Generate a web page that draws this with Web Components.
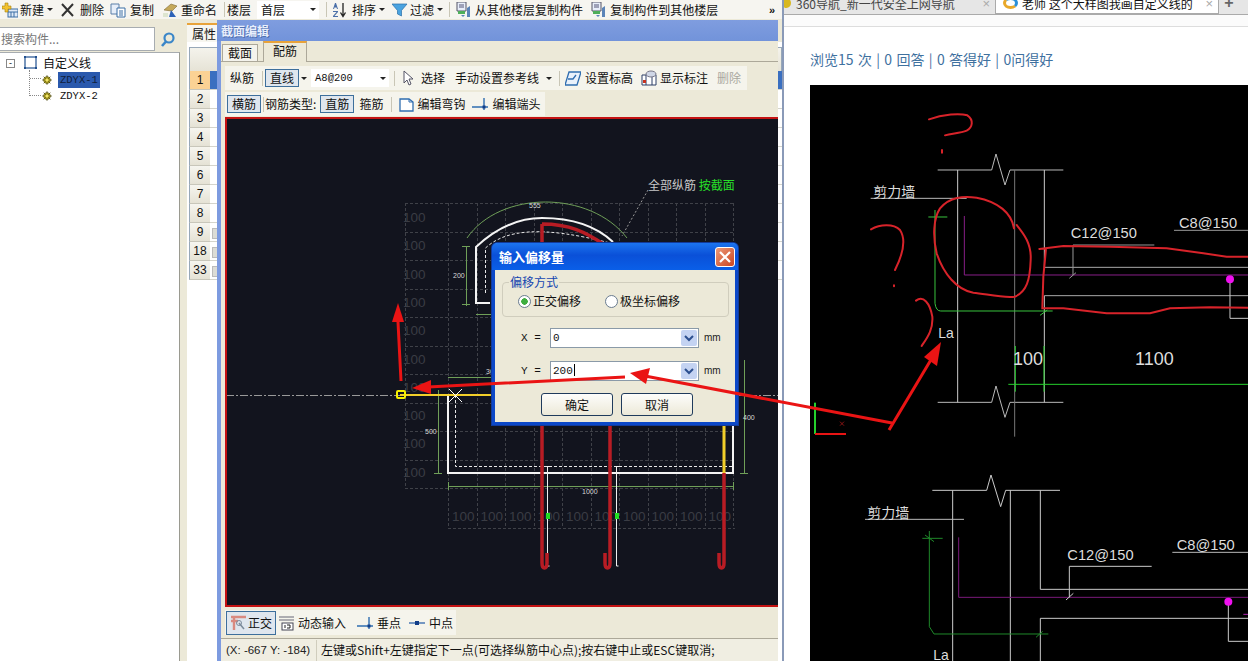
<!doctype html>
<html lang="zh">
<head>
<meta charset="UTF-8" />
<title>截面编辑</title>
<style>
  html, body { margin: 0; height: 100%; overflow: hidden; background: #fff; }
  body { font: 12px/16px "Noto Sans CJK SC", "Liberation Sans", sans-serif; color: #111; }
</style>
</head>
<body>
<app-shell></app-shell>

<script>
const ICONS = {
  add: '<rect x="6" y="7" width="10" height="8" fill="#dfe9f7" stroke="#3a6ea5"/><path d="M6 10h10M9 10v5M12 10v5" stroke="#3a6ea5"/><path d="M0 4h3V1h3v3h3v3H6v3H3V7H0z" fill="#f2c230" stroke="#a57f10" stroke-width=".6"/>',
  del: '<path d="M2 2l11 12M13 2L2 14" stroke="#333" stroke-width="2"/>',
  copy: '<path d="M1 2h8v10H1z" fill="#e6eef9" stroke="#5b7fa8"/><path d="M7 6h8v9H7z" fill="#fff" stroke="#3a6ea5"/><path d="M9 9h4M9 11h4M9 13h4" stroke="#3a6ea5"/>',
  rename: '<path d="M2 8l7-6 6 2-5 5z" fill="#c5a95a" stroke="#7f6a35" stroke-width=".6"/><path d="M9 8l5 7H7z" fill="#2d62b8"/><path d="M1 11h5v4H1z" fill="#dde5d0"/>',
  sort: '<path d="M3 1L1 7h1l.5-1.500h2L5 7h1L4 1zM1 9h5v1L2.500 14H6v1H1v-1l3.500-4H1z" fill="#4a6fa8"/><path d="M11 1v12M8.500 10.500L11 14.500l2.500-4" fill="none" stroke="#222" stroke-width="1.300"/>',
  filter: '<path d="M0 2h15L9.500 8.500V14l-4-2V8.500z" fill="#4aa3e0" stroke="#2a6fa8" stroke-width=".7"/>',
  floors: '<path d="M2 0h9v9H2z" fill="#e8eefa" stroke="#556"/><path d="M4 3h5M4 5h5" stroke="#557"/><path d="M3 9h7v3H3z" fill="#4fae5a"/><path d="M12 6l3-2v11h-3zM6 13l2 2 2-2z" fill="#5b84b8"/>',
  cursor: '<path d="M3 1v12l3-3 2 5 2-1-2-5h4z" fill="#fff" stroke="#556" stroke-width="1"/>',
  level: '<path d="M4 2h12l-4 13H0z" fill="#e9f1fb" stroke="#2f6db0" stroke-width="1.300"/><path d="M3 9h5l3-4" fill="none" stroke="#2f6db0" stroke-width="1.300"/>',
  mark: '<path d="M1 5h14v10H1z" fill="#fff" stroke="#2c3e66"/><path d="M5 5v10M11 5v10" stroke="#2c3e66"/><ellipse cx="10" cy="4" rx="5" ry="3" fill="#cfd6e6" stroke="#778"/><rect x="2" y="10" width="3" height="3" fill="#c8321e"/>',
  hook: '<path d="M2 3h9l4 3v9H2z" fill="#fff" stroke="#2f6db0" stroke-width="1.300"/><path d="M11 3v3h4" fill="none" stroke="#2f6db0"/>',
  end: '<path d="M0 11h16M12 2v12" stroke="#2f6db0" stroke-width="1.400"/><rect x="10.500" y="9.500" width="3" height="3" fill="#123e88"/>',
  ortho: '<path d="M1 2h15M4 2v13M1 6h7" stroke="#d98a80" stroke-width="2.400" fill="none"/><path d="M9 8l5 6" stroke="#7c8b9c" stroke-width="1.500"/><circle cx="9" cy="8" r="2.500" fill="none" stroke="#7c8b9c"/>',
  dyn: '<path d="M0 2h15M0 5h15" stroke="#667"/><rect x="3" y="8" width="11" height="7" fill="#fff" stroke="#445"/><path d="M6 10v3M8 10h3v3H8" stroke="#222" fill="none"/>',
  mid: '<path d="M0 8h16" stroke="#4a78b5" stroke-width="1.500"/><rect x="6" y="6" width="4" height="4" fill="#123e88"/>',
  search: '<circle cx="9" cy="7" r="4.500" fill="none" stroke="#3a86c8" stroke-width="2.200"/><path d="M6 10.500L2 15" stroke="#3a86c8" stroke-width="2.600"/>',
  section: '<rect x="2" y="2" width="11" height="11" fill="none" stroke="#21508f" stroke-width="1.200"/><path d="M1 1h2v2H1zM12 1h2v2h-2zM1 12h2v2H1zM12 12h2v2h-2z" fill="#21508f"/>',
  gear: '<circle cx="8" cy="8" r="4.500" fill="#e5d22a" stroke="#4d4a10"/><path d="M8 1.500v13M1.500 8h13M3.500 3.500l9 9M12.500 3.500l-9 9" stroke="#4d4a10"/><circle cx="8" cy="8" r="2" fill="#f2e66a"/>'
};

class UiIcon extends HTMLElement {
  constructor() {
    super();
    this.attachShadow({ mode: 'open' });
    const size = this.getAttribute('size') || 16;
    this.shadowRoot.innerHTML = `
      <style>:host { display: inline-block; width: ${size}px; height: ${size}px; flex: none; } svg { display: block; }</style>
      <svg width="${size}" height="${size}" viewBox="0 0 16 16">${ICONS[this.getAttribute('name')] || ''}</svg>`;
  }
}
customElements.define('ui-icon', UiIcon);

class ToolBar extends HTMLElement {
  constructor() {
    super();
    this.attachShadow({ mode: 'open' });
    this.shadowRoot.innerHTML = `
      <style>
        :host { display: flex; align-items: center; height: 24px; width: max-content; background: #f5f4ec; white-space: nowrap; }
      </style>
      <slot></slot>`;
  }
}
customElements.define('tool-bar', ToolBar);

class ToolItem extends HTMLElement {
  constructor() {
    super();
    this.attachShadow({ mode: 'open' });
    const icon = this.getAttribute('icon');
    this.shadowRoot.innerHTML = `
      <style>
        :host { display: inline-flex; align-items: center; flex: none; gap: var(--gap, 4px); height: 16px; line-height: 16px; }
        :host([pressed]) { height: 16px; padding: 0 4px; border: 1px solid #3d6f9c; background: #dfe6ee; }
        :host([disabled]) { color: #aaa8a0; }
      </style>
      ${icon ? `<ui-icon name="${icon}"></ui-icon>` : ''}<slot></slot>`;
  }
}
customElements.define('tool-item', ToolItem);

class ToolCaret extends HTMLElement {
  constructor() {
    super();
    this.attachShadow({ mode: 'open' });
    this.shadowRoot.innerHTML = `
      <style>
        :host { display: inline-block; flex: none; width: 0; height: 0; border: 3px solid transparent; border-top: 3px solid #222; border-bottom: 0; }
      </style>`;
  }
}
customElements.define('tool-caret', ToolCaret);

class ToolSep extends HTMLElement {
  constructor() {
    super();
    this.attachShadow({ mode: 'open' });
    this.shadowRoot.innerHTML = `<style>:host { display: inline-block; flex: none; width: 1px; height: 15px; background: #c9c6b6; }</style>`;
  }
}
customElements.define('tool-sep', ToolSep);

class ToolCombo extends HTMLElement {
  constructor() {
    super();
    this.attachShadow({ mode: 'open' });
    this.shadowRoot.innerHTML = `
      <style>
        :host { display: inline-flex; align-items: center; justify-content: space-between; flex: none; box-sizing: border-box; height: 18px; padding: 0 3px 0 4px; background: #fff; }
      </style>
      <slot></slot><tool-caret></tool-caret>`;
  }
}
customElements.define('tool-combo', ToolCombo);

class MainToolbar extends HTMLElement {
  constructor() {
    super();
    this.attachShadow({ mode: 'open' });
    this.shadowRoot.innerHTML = `
      <style>
        :host { display: flex; align-items: center; box-sizing: border-box; height: 19px; padding-left: 2px; background: #f6f5f0; white-space: nowrap; }
        .more { margin: 0 7px 0 auto; font: bold 11px/12px "Liberation Sans", sans-serif; }
      </style>
      <tool-item icon="add" style="--gap:2px">新建</tool-item>
      <tool-caret style="margin-left:3px"></tool-caret>
      <tool-item icon="del" style="margin-left:7px">删除</tool-item>
      <tool-item icon="copy" style="margin-left:6px">复制</tool-item>
      <tool-item icon="rename" style="margin-left:8px;--gap:3px">重命名</tool-item>
      <tool-sep style="margin-left:7px"></tool-sep>
      <tool-item style="margin-left:2px">楼层</tool-item>
      <tool-combo style="margin-left:6px;width:62px">首层</tool-combo>
      <tool-sep style="margin-left:7px"></tool-sep>
      <tool-item icon="sort" style="margin-left:5px">排序</tool-item>
      <tool-caret style="margin-left:3px"></tool-caret>
      <tool-item icon="filter" style="margin-left:7px;--gap:2px">过滤</tool-item>
      <tool-caret style="margin-left:3px"></tool-caret>
      <tool-sep style="margin-left:6px"></tool-sep>
      <tool-item icon="floors" style="margin-left:5px">从其他楼层复制构件</tool-item>
      <tool-item icon="floors" style="margin-left:7px">复制构件到其他楼层</tool-item>
      <span class="more">»</span>`;
  }
}
customElements.define('main-toolbar', MainToolbar);

class TreePanel extends HTMLElement {
  constructor() {
    super();
    this.attachShadow({ mode: 'open' });
    this.shadowRoot.innerHTML = `
      <style>
        :host { display: flex; flex-direction: column; width: 180px; flex: none; background: #ece9d8; }
        .search { display: flex; align-items: center; gap: 5px; height: 24px; margin-top: 8px; }
        .input { box-sizing: border-box; width: 155px; height: 24px; padding: 3px 0 0 1px; background: #fff; border: 1px solid #a7acb0; border-left: 0; color: #777; }
        .tree { position: relative; flex: 1; margin-top: 1px; padding-top: 2px; background: #fff; border-top: 1px solid #a7acb0; border-right: 1px solid #9a9a90; }
        .row { display: flex; align-items: center; height: 16.500px; }
        .box { box-sizing: border-box; width: 9px; height: 9px; margin: 0 8px 0 6px; border: 1px solid #888; font: 9px/7px "Liberation Sans", sans-serif; text-align: center; }
        .leaf { padding-left: 41px; font-family: "Liberation Mono", monospace; font-size: 10.500px; }
        .leaf span { margin-left: 5px; padding: 0 2px; line-height: 16px; }
        .sel { background: #2a59ad; color: #10203c; }
        .lines { position: absolute; left: 29px; top: 17px; width: 11px; height: 25px; border-left: 1px dotted #888; border-bottom: 1px dotted #888; }
        .lines::after { content: ""; position: absolute; left: 0; top: 8px; width: 11px; border-top: 1px dotted #888; }
      </style>
      <div class="search"><div class="input">搜索构件...</div><ui-icon name="search"></ui-icon></div>
      <div class="tree">
        <div class="lines"></div>
        <div class="row"><span class="box">-</span><ui-icon name="section"></ui-icon><span style="margin-left:4px">自定义线</span></div>
        <div class="row leaf"><ui-icon name="gear" size="12"></ui-icon><span class="sel">ZDYX-1</span></div>
        <div class="row leaf"><ui-icon name="gear" size="12"></ui-icon><span>ZDYX-2</span></div>
      </div>`;
  }
}
customElements.define('tree-panel', TreePanel);

class PropsPanel extends HTMLElement {
  constructor() {
    super();
    this.attachShadow({ mode: 'open' });
    const rows = [1, 2, 3, 4, 5, 6, 7, 8, 9, 18, 33];
    this.shadowRoot.innerHTML = `
      <style>
        :host { display: flex; flex-direction: column; flex: 1; padding-left: 7px; background: #ece9d8; }
        .tab { width: 32px; height: 19px; margin-top: 4px; padding-left: 5px; background: #f7f6f0; border-top: 2px solid #e8a33a; line-height: 18px; box-sizing: border-box; }
        .body { flex: 1; padding: 5px 0 0 2px; background: #fff; }
        .head { height: 24px; background: linear-gradient(#f4f3ec, #e6e3d6); border: 1px solid #98a8b8; border-bottom: 0; box-sizing: border-box; }
        .row { display: flex; height: 19px; font: 12px/19px "Liberation Sans", sans-serif; text-align: center; }
        .num { width: 21px; background: linear-gradient(#f6f5ef, #e5e2d5); border-left: 1px solid #98a8b8; border-bottom: 1px solid #c8c6ba; box-sizing: border-box; }
        .on .num { background: #fbd294; }
        .cell { flex: 1; border-bottom: 1px solid #d4d4cc; position: relative; }
        .on .cell { background: #3a6fc0; }
        .chk { position: absolute; left: 2px; top: 5px; width: 8px; height: 9px; background: #dcdcd6; border: 1px solid #bbb; }
      </style>
      <div class="tab">属性</div>
      <div class="body">
        <div class="head"></div>
        ${rows.map((n, i) => `<div class="row ${i === 0 ? 'on' : ''}"><div class="num">${n}</div><div class="cell">${n >= 9 ? '<span class="chk"></span>' : ''}</div></div>`).join('')}
      </div>`;
  }
}
customElements.define('props-panel', PropsPanel);

class CadCanvas extends HTMLElement {
  constructor() {
    super();
    this.attachShadow({ mode: 'open' });
    let grid = '';
    for (let i = 0; i <= 10; i++) {
      const y = Math.round(203 + i * 28.5) + .5;
      grid += `<path d="M405 ${y}H735"/>`;
    }
    grid += '<path d="M448 528.500H735M405.500 203V488"/>';
    for (let i = 0; i <= 10; i++) {
      const x = Math.round(448 + i * 28.5) + .5;
      grid += `<path d="M${x} 203V528"/>`;
    }
    let labels = '';
    for (let i = 0; i < 10; i++) {
      labels += `<text x="${452 + i * 28.5}" y="521">100</text>`;
      labels += `<text x="403" y="${222 + i * 28.3}">100</text>`;
    }
    const hook = (x, d) => `<path d="M${x} 425V563q0 5 ${d / 2} 5t${d / 2}-5V553" fill="none"/>`;
    this.shadowRoot.innerHTML = `
      <style>
        :host { display: block; flex: 1; min-height: 0; background: #12141e; border: solid #c41212; border-width: 2px 0 2px 2px; overflow: hidden; }
        svg { display: block; }
        text { font-family: "Liberation Sans", sans-serif; }
      </style>
      <svg width="551" height="487" viewBox="227 119 551 487">
        <g stroke="#3f4148" stroke-dasharray="3 2" fill="none">${grid}</g>
        <g fill="#3a3c44" font-size="13.500">${labels}</g>
        <path d="M226 395.500H400M735 395.500H778" stroke="#999" stroke-dasharray="8 2 2 2"/>
        <path d="M648 190L622 236" stroke="#999" stroke-dasharray="2 2"/>
        <text x="648" y="190" font-size="12" fill="#c8c8c8" style="font-family:'Noto Sans CJK SC',sans-serif">全部纵筋 <tspan fill="#28e028">按截面</tspan></text>
        <g stroke="#6f9f58" fill="none">
          <path d="M467 238C500 190 590 190 627 238"/>
          <path d="M466.500 246V306M462 246.500h8M462 304.500h8M476 314.500H494M448 377.500H500M438.500 390V473M434 473.500h8M744.500 360V473M740 473.500h8M448 486.500H733M448.500 482v8M733.500 482v8"/>
        </g>
        <g fill="#d8d8d8" font-size="7">
          <text x="529" y="208">555</text><text x="453" y="278">200</text><text x="486" y="374">30</text>
          <text x="425" y="434">500</text><text x="743" y="420">400</text><text x="582" y="494">1000</text>
        </g>
        <g fill="none" stroke="#f4f4f4" stroke-width="2">
          <path d="M490 303H476V247C505 220 530 218 542 218C570 218 595 225 613 242"/>
          <path d="M492 395H448V473H733V355"/>
        </g>
        <g fill="none" stroke="#e8e8e8" stroke-dasharray="3 2">
          <path d="M485.500 293V248C505 230 540 225 610 243"/>
          <path d="M455.500 395V466.500H733"/>
        </g>
        <g fill="none" stroke="#f0f0f0">
          <path d="M547.500 466V566h2M550 466.500h-3M616.500 466V566h2M619 466.500h-3"/>
        </g>
        <g stroke="#b81c24" stroke-width="3.500">
          <path d="M542 224V250M542 224C570 224 585 232 605 245" fill="none"/>
          ${hook(542, 5)}
          ${hook(610, -5)}
          <path d="M724 473V563q0 5-2.500 5t-2.500-5V553" fill="none"/>
        </g>
        <path d="M724 425V473" stroke="#f2cf2a" stroke-width="3"/>
        <path d="M400 395H492" stroke="#f2cf2a" stroke-width="2"/>
        <path d="M449 389l13 13M462 389l-13 13" stroke="#fff"/>
        <rect x="397" y="391" width="8" height="7" rx="1" fill="none" stroke="#f5f000" stroke-width="2"/>
        <rect x="546" y="513" width="4" height="6" fill="#22dd22"/><rect x="615" y="513" width="4" height="6" fill="#22dd22"/>
      </svg>`;
  }
}
customElements.define('cad-canvas', CadCanvas);

class OffsetDialog extends HTMLElement {
  constructor() {
    super();
    this.attachShadow({ mode: 'open' });
    const row = (label, value) => `
      <div class="row">
        <span class="lab">${label} =</span>
        <div class="input"><span>${value}</span><i class="drop"><svg width="10" height="7" viewBox="0 0 10 7"><path d="M1 1l4 4 4-4" fill="none" stroke="#2c4f8f" stroke-width="2"/></svg></i></div>
        <span class="mm">mm</span>
      </div>`;
    this.shadowRoot.innerHTML = `
      <style>
        :host { position: absolute; left: 492px; top: 243px; width: 246px; height: 182px; box-sizing: border-box; display: flex; flex-direction: column; background: #ece9d8; border: 3px solid #0c48c8; border-top: 0; border-radius: 5px 5px 0 0; box-shadow: 0 0 0 1px #123a9a; }
        .title { display: flex; align-items: center; justify-content: space-between; height: 27px; margin: 0 -3px; padding: 0 3px 0 7px; background: linear-gradient(#1c74ee, #0a50d8 45%, #0a5fe8); color: #fff; font-weight: bold; font-size: 13px; border-radius: 5px 5px 0 0; }
        .close { width: 20px; height: 20px; box-sizing: border-box; background: linear-gradient(135deg, #ec9a7a, #cc4520); border: 1px solid #fff; border-radius: 3px; }
        .close svg { display: block; margin: 3px; }
        .group { position: relative; display: flex; gap: 24px; height: 35px; margin: 12px 6px 0 7px; padding: 3px 0 0 15px; box-sizing: border-box; border: 1px solid #d0cdbd; border-radius: 4px; align-items: center; }
        .legend { position: absolute; left: 6px; top: -8px; padding: 0 1px; background: #ece9d8; color: #1446b0; line-height: 14px; }
        .radio { display: flex; align-items: center; gap: 2px; }
        .dot { width: 11px; height: 11px; border-radius: 50%; background: #fff; border: 1px solid #6a7c90; }
        .dot.on { background: radial-gradient(#3fae3f 0 3px, #fff 3.500px); }
        .row { display: flex; align-items: center; height: 20px; margin-left: 26px; }
        .row:nth-of-type(3) { margin-top: 11px; }
        .row:nth-of-type(4) { margin-top: 13px; }
        .lab { width: 29px; font: 11px/14px "Liberation Mono", monospace; }
        .input { display: flex; justify-content: space-between; align-items: center; box-sizing: border-box; width: 149px; height: 20px; padding-left: 2px; background: #fff; border: 1px solid #8a9aa8; font: 11px/16px "Liberation Mono", monospace; }
        .drop { display: flex; align-items: center; justify-content: center; width: 16px; height: 16px; margin-right: 1px; background: #c4d3f2; border-radius: 2px; }
        .mm { margin-left: 5px; color: #222; font: 10px/14px "Liberation Sans", sans-serif; }
        .caret { display: inline-block; width: 1px; height: 12px; margin-left: 1px; background: #000; vertical-align: -2px; }
        .btns { display: flex; gap: 8px; margin: 12px 0 0 46px; }
        button { width: 72px; height: 23px; padding: 0; font: inherit; color: #111; background: linear-gradient(#fdfdfb, #ece9d8); border: 1px solid #1f3b5c; border-radius: 3px; }
      </style>
      <div class="title"><span>输入偏移量</span>
        <div class="close"><svg width="12" height="12" viewBox="0 0 12 12"><path d="M1 1l10 10M11 1L1 11" stroke="#fff" stroke-width="2.200"/></svg></div>
      </div>
      <div class="group"><span class="legend">偏移方式</span>
        <span class="radio"><i class="dot on"></i>正交偏移</span>
        <span class="radio"><i class="dot"></i>极坐标偏移</span>
      </div>
      ${row('X', '0')}
      ${row('Y', '200<i class="caret"></i>')}
      <div class="btns"><button>确定</button><button>取消</button></div>`;
  }
}
customElements.define('offset-dialog', OffsetDialog);

class SectionEditor extends HTMLElement {
  constructor() {
    super();
    this.attachShadow({ mode: 'open' });
    this.shadowRoot.innerHTML = `
      <style>
        :host { position: absolute; left: 217px; top: 20px; width: 561px; height: 641px; box-sizing: border-box; display: flex; flex-direction: column; background: #ece9d8; border-left: 4px solid #7d9be0; }
        .title { height: 21px; margin-left: -4px; padding-left: 4px; background: linear-gradient(#7f9ddf, #7293da); color: #e8eefc; font-weight: bold; line-height: 21px; text-shadow: 1px 1px 0 #5070b0; flex: none; }
        .tabs { display: flex; align-items: flex-end; height: 21px; flex: none; border-bottom: 1px solid #aca899; box-sizing: border-box; padding-left: 1px; }
        .tab { width: 36px; height: 17px; text-align: center; background: #f4f3ec; border: 1px solid #aca899; border-bottom: 0; box-sizing: border-box; }
        .tab.on { width: 44px; height: 21px; margin: 0 0 -1px 5px; background: #ece9d8; border: 1px solid #aca899; border-top: 2px solid #e8a33a; border-bottom: 0; }
        .bars { display: flex; flex-direction: column; gap: 2px; margin: 4px 0 1px 4px; flex: none; }
        .canvas-wrap { display: flex; flex-direction: column; flex: 1; min-height: 0; margin-left: 4px; }
        .bottom { margin: 3px 0 3px 4px; height: 25px; flex: none; }
        .status { display: flex; height: 22px; flex: none; border-top: 1px solid #aca899; align-items: center; background: #f0eee2; padding-left: 4px; }
        .coord { width: 92px; font: 11.500px/16px "Liberation Sans", sans-serif; color: #222; border-right: 1px solid #d0cdbd; flex: none; box-sizing: border-box; padding-left: 1px; height: 21px; line-height: 21px; }
        .msg { margin-left: 4px; white-space: nowrap; }
      </style>
      <div class="title">截面编辑</div>
      <div class="tabs"><div class="tab">截面</div><div class="tab on">配筋</div></div>
      <div class="bars">
        <tool-bar>
          <tool-item style="margin-left:5px">纵筋</tool-item>
          <tool-sep style="margin-left:8px"></tool-sep>
          <tool-item pressed style="margin-left:2px">直线</tool-item>
          <tool-caret style="margin-left:2px"></tool-caret>
          <tool-combo style="margin-left:4px;width:78px;font:10.500px 'Liberation Mono',monospace">A8@200</tool-combo>
          <tool-sep style="margin-left:5px"></tool-sep>
          <tool-item icon="cursor" style="margin-left:6px">选择</tool-item>
          <tool-item style="margin-left:10px">手动设置参考线</tool-item>
          <tool-caret style="margin-left:7px"></tool-caret>
          <tool-sep style="margin-left:7px"></tool-sep>
          <tool-item icon="level" style="margin-left:5px">设置标高</tool-item>
          <tool-item icon="mark" style="margin-left:8px;--gap:3px">显示标注</tool-item>
          <tool-item disabled style="margin:0 6px 0 9px">删除</tool-item>
        </tool-bar>
        <tool-bar>
          <tool-item pressed style="margin-left:2px">横筋</tool-item>
          <tool-sep style="margin-left:2px"></tool-sep>
          <tool-item style="margin-left:1px">钢筋类型:</tool-item>
          <tool-item pressed style="margin-left:4px">直筋</tool-item>
          <tool-item style="margin-left:5px">箍筋</tool-item>
          <tool-sep style="margin-left:8px"></tool-sep>
          <tool-item icon="hook" style="margin-left:6px;--gap:3px">编辑弯钩</tool-item>
          <tool-item icon="end" style="margin:0 5px 0 7px">编辑端头</tool-item>
        </tool-bar>
      </div>
      <div class="canvas-wrap"><cad-canvas></cad-canvas></div>
      <tool-bar class="bottom">
        <tool-item pressed icon="ortho" style="margin-left:1px;--gap:2px;height:22px;padding:0 3px">正交</tool-item>
        <tool-item icon="dyn" style="margin-left:3px;--gap:3px">动态输入</tool-item>
        <tool-item icon="end" style="margin-left:11px">垂点</tool-item>
        <tool-item icon="mid" style="margin:0 3px 0 8px">中点</tool-item>
      </tool-bar>
      <div class="status"><div class="coord">(X: -667 Y: -184)</div><div class="msg">左键或Shift+左键指定下一点(可选择纵筋中心点);按右键中止或ESC键取消;</div></div>`;
  }
}
customElements.define('section-editor', SectionEditor);

class BrowserPane extends HTMLElement {
  constructor() {
    super();
    this.attachShadow({ mode: 'open' });
    const zig = (y, x1, x2, x3, x4, up, down, end) => `M${x1} ${y}H${x2}L${x3} ${up}L${x4} ${down}L${x4 + 15} ${y}H${end}`;
    this.shadowRoot.innerHTML = `
      <style>
        :host { display: flex; flex-direction: column; flex: 1; min-width: 0; background: #fff; border-left: 2px solid #8a9ab8; }
        .tabs { display: flex; height: 15px; background: #e6e6e6; border-bottom: 1px solid #aaa; box-sizing: border-box; font-size: 12px; line-height: 7px; overflow: hidden; flex: none; }
        .tab { display: flex; flex: none; box-sizing: border-box; padding-left: 12px; align-items: flex-start; color: #444; white-space: nowrap; position: relative; overflow: hidden; }
        .t1 { width: 211px; }
        .t2 { width: 224px; padding-left: 26px; background: #fff; color: #111; border: 1px solid #aaa; border-top: 0; }
        .x { position: absolute; right: 5px; top: 0; color: #aaa; font: 13px/7px "Liberation Sans", sans-serif; }
        .logo { position: absolute; left: 7px; top: -3px; width: 15px; height: 12px; border: 3px solid #2a8fd8; border-color: #2a8fd8 #2a8fd8 #e8a82a #e8a82a; border-radius: 50%; box-sizing: border-box; }
        .ball { position: absolute; left: -2px; top: -2px; width: 9px; height: 10px; border-radius: 50%; background: #d8b820; }
        .plus { width: 20px; text-align: center; color: #666; font: bold 16px/6px "Liberation Sans", sans-serif; }
        .bar { height: 12px; box-sizing: border-box; border-bottom: 1px solid #ddd; flex: none; background: #fbfbfb; }
        .stats { height: 58px; padding: 23px 0 0 26px; box-sizing: border-box; flex: none; color: #3f719f; font-size: 14px; line-height: 18px; white-space: nowrap; word-spacing: 1.200px; }
        .image { flex: 1; min-height: 0; margin-left: 26px; background: #000; overflow: hidden; }
        svg { display: block; }
        text { font-family: "Liberation Sans", "Noto Sans CJK SC", sans-serif; }
      </style>
      <div class="tabs">
        <div class="tab t1"><i class="ball"></i>360导航_新一代安全上网导航<span class="x">×</span></div>
        <div class="tab t2"><i class="logo"></i>老师 这个大样图我画自定义线的<span class="x">×</span></div>
        <div class="plus">+</div>
      </div>
      <div class="bar"></div>
      <div class="stats">浏览15 次 | 0 回答 | 0 答得好 | 0问得好</div>
      <div class="image">
        <svg width="438" height="576" viewBox="810 85 438 576">
          <g transform="translate(810 90) scale(.33333)" fill="none" stroke-width="3">
            <path d="${zig(240, 383, 545, 558, 585, 192, 285, 760)}" stroke="#bbb"/>
            <path d="${zig(937, 383, 545, 558, 585, 888, 982, 760)}" stroke="#bbb"/>
            <path d="M443 240V937M703 240V533M703 617V937" stroke="#ccc"/>
            <path d="M614 240V1040" stroke="#777"/>
            <path d="M182 325H470" stroke="#bbb"/>
            <path d="M375 360V640Q378 663 392 663H728M355 381H412M690 676L712 660" stroke="#39c43e"/>
            <path d="M463 378V555H1314" stroke="#8a1f8a"/>
            <path d="M703 532H1314M703 617H1314" stroke="#aaa"/>
            <path d="M1033 465H789V555M778 565L798 548M1092 421H1314" stroke="#999"/>
            <path d="M1260 568V685H1314" stroke="#ccc"/>
            <path d="M595 883H1314M616 768V905M702 768V905" stroke="#25d02c"/>
            <path d="M15 938V1032" stroke="#25d02c" stroke-width="6"/>
            <path d="M15 1032H108" stroke="#e81414" stroke-width="6"/>
            <path d="M90 995l12 12M102 995l-12 12" stroke="#8a1414"/>
            <g stroke="#d8232a" stroke-width="6" stroke-linecap="round">
              <path d="M357 88C400 72 450 70 472 76C492 90 488 112 470 122C450 130 425 130 405 136M396 180V188"/>
              <path d="M612 415C605 370 565 335 500 323C460 318 420 320 390 355C370 385 368 440 380 490C400 550 440 600 490 608C530 612 580 625 615 620C650 605 660 570 662 510C665 460 640 430 620 405"/>
              <path d="M688 477L760 468L900 470L1070 475L1180 490L1250 500L1314 500M708 477L700 560L697 655L760 655L890 670L1020 670L1080 655L1200 652L1314 653"/>
              <path d="M183 418C210 403 250 400 270 420C290 450 275 500 255 540M252 586V589M318 632C340 615 360 640 367 680C370 720 350 745 335 768"/>
            </g>
            <circle cx="1260" cy="568" r="12" fill="#f010f0"/>
            <g fill="#ddd" stroke="none">
              <text x="190" y="320" font-size="42" style="font-family:'Noto Sans CJK SC',sans-serif">剪力墙</text>
              <text x="782" y="445" font-size="44">C12@150</text>
              <text x="1107" y="415" font-size="44">C8@150</text>
              <text x="385" y="745" font-size="42">La</text>
              <text x="609" y="825" font-size="54">100</text>
              <text x="975" y="825" font-size="54">1100</text>
            </g>
          </g>
          <g transform="translate(810 420) scale(.33333)" fill="none" stroke-width="3">
            <path d="${zig(211, 367, 530, 543, 572, 165, 260, 750)}" stroke="#ccc"/>
            <path d="M428 211V723M601 211V723M691 211V508H1314M691 723V595H1314" stroke="#ccc"/>
            <path d="M165 298H462M1087 397H1314" stroke="#bbb"/>
            <path d="M358 333V620L372 642H715M337 355H398M345 345L372 365M678 652L698 634" stroke="#1f8a2a"/>
            <path d="M446 352V532H1314" stroke="#7a1a7a"/>
            <path d="M1025 439H778V532M768 540L790 520" stroke="#ccc"/>
            <path d="M1255 545V664H1314" stroke="#ccc"/>
            <path d="M1300 583H1314" stroke="#b020b0"/>
            <circle cx="1255" cy="545" r="12" fill="#f010f0"/>
            <g fill="#ddd" stroke="none">
              <text x="172" y="295" font-size="42" style="font-family:'Noto Sans CJK SC',sans-serif">剪力墙</text>
              <text x="772" y="420" font-size="44">C12@150</text>
              <text x="1100" y="390" font-size="44">C8@150</text>
              <text x="370" y="720" font-size="42">La</text>
            </g>
          </g>
        </svg>
      </div>`;
  }
}
customElements.define('browser-pane', BrowserPane);

class ArrowLayer extends HTMLElement {
  constructor() {
    super();
    this.attachShadow({ mode: 'open' });
    this.shadowRoot.innerHTML = `
      <style>:host { position: absolute; left: 0; top: 0; width: 1248px; height: 661px; pointer-events: none; } svg { display: block; }</style>
      <svg width="1248" height="661" viewBox="0 0 1248 661">
        <g stroke="#ea1414" stroke-width="3" fill="none">
          <path d="M892 423L645 376M889 430L932 358M625 377L428 387M401 381L398 322"/>
        </g>
        <g fill="#ea1414">
          <path d="M630 373L650 368L646 384z"/>
          <path d="M412 388L431 380L431 394z"/>
          <path d="M398 303L404 322H392z"/>
          <path d="M941 342L937 366L924 357z"/>
        </g>
      </svg>`;
  }
}
customElements.define('arrow-layer', ArrowLayer);

class AppShell extends HTMLElement {
  constructor() {
    super();
    this.attachShadow({ mode: 'open' });
    this.shadowRoot.innerHTML = `
      <style>
        :host { display: grid; grid-template-columns: 782px 1fr; position: relative; width: 1248px; height: 661px; overflow: hidden; }
        .left { display: flex; flex-direction: column; min-width: 0; }
        .main { display: flex; flex: 1; min-height: 0; }
      </style>
      <div class="left">
        <main-toolbar></main-toolbar>
        <div class="main"><tree-panel></tree-panel><props-panel></props-panel></div>
      </div>
      <browser-pane></browser-pane>
      <section-editor></section-editor>
      <offset-dialog></offset-dialog>
      <arrow-layer></arrow-layer>`;
  }
}
customElements.define('app-shell', AppShell);
</script>
</body>
</html>
